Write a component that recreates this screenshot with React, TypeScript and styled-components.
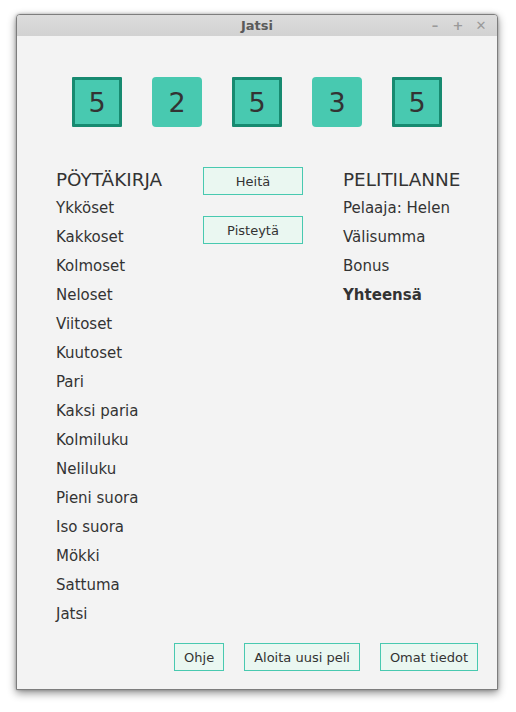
import styled, { createGlobalStyle, css } from 'styled-components';

const GlobalStyle = createGlobalStyle`
  html, body {
    margin: 0;
    padding: 0;
    background: #ffffff;
  }
  body {
    font-family: "DejaVu Sans", "Liberation Sans", sans-serif;
    color: #333333;
  }
`;

const Page = styled.div`
  width: 516px;
  height: 712px;
  padding: 14px 0 0 16px;
  box-sizing: border-box;
`;

const Window = styled.div`
  width: 482px;
  height: 676px;
  box-sizing: border-box;
  border: 1px solid #7d7d7d;
  border-radius: 4px 4px 0 0;
  background: #f3f3f3;
  box-shadow: 0 3px 8px rgba(0, 0, 0, 0.45), 0 0 3px rgba(0, 0, 0, 0.25);
  display: flex;
  flex-direction: column;
  overflow: hidden;
`;

const TitleBar = styled.div`
  position: relative;
  height: 21px;
  flex: none;
  background: linear-gradient(#dcdcdc, #d2d2d2);
  display: flex;
  align-items: center;
  justify-content: center;
  font-size: 13px;
  font-weight: bold;
  color: #5a5a5a;
`;

const Controls = styled.div`
  position: absolute;
  right: 10px;
  top: 0;
  height: 100%;
  display: flex;
  align-items: center;
  gap: 11px;
`;

const Control = styled.span`
  width: 12px;
  display: flex;
  justify-content: center;
  color: #9a9a9a;
  font-size: 13px;
  font-weight: bold;
`;

const Content = styled.div`
  flex: 1;
  display: flex;
  flex-direction: column;
  padding: 41px 19px 18px 39px;
`;

const DiceRow = styled.div`
  display: flex;
  justify-content: center;
  gap: 30px;
  margin-left: -20px;
`;

const Die = styled.div<{ $held: boolean }>`
  width: 50px;
  height: 50px;
  box-sizing: border-box;
  background: #48c9b0;
  display: flex;
  align-items: center;
  justify-content: center;
  font-size: 27px;
  color: #333333;
  border-radius: 4px;
  ${({ $held }) =>
    $held &&
    css`
      border: 3px solid #178a70;
      border-radius: 1px;
    `}
`;

const Board = styled.div`
  display: grid;
  grid-template-columns: 107px 100px 1fr;
  column-gap: 40px;
  margin-top: 40px;
`;

const Column = styled.div`
  display: flex;
  flex-direction: column;
`;

const Heading = styled.div`
  font-size: 18.4px;
  line-height: 26px;
  height: 26px;
  margin-bottom: 0.5px;
  white-space: nowrap;
`;

const Row = styled.div<{ $bold?: boolean }>`
  font-size: 15px;
  line-height: 29px;
  white-space: nowrap;
  font-weight: ${({ $bold }) => ($bold ? 'bold' : 'normal')};
`;

const ActionColumn = styled.div`
  display: flex;
  flex-direction: column;
  gap: 21px;
`;

const Button = styled.button<{ $width?: number }>`
  height: 28px;
  box-sizing: border-box;
  width: ${({ $width }) => ($width ? `${$width}px` : 'auto')};
  padding: 0 9px;
  border: 1.5px solid #48c9b0;
  background: #eaf7f1;
  font-family: "DejaVu Sans", "Liberation Sans", sans-serif;
  font-size: 13px;
  color: #333333;
  cursor: pointer;
`;

const Footer = styled.div`
  margin-top: auto;
  display: flex;
  justify-content: flex-end;
  gap: 20px;
`;

const dice = [
  { value: 5, held: true },
  { value: 2, held: false },
  { value: 5, held: true },
  { value: 3, held: false },
  { value: 5, held: true },
];

const categories = [
  'Ykköset',
  'Kakkoset',
  'Kolmoset',
  'Neloset',
  'Viitoset',
  'Kuutoset',
  'Pari',
  'Kaksi paria',
  'Kolmiluku',
  'Neliluku',
  'Pieni suora',
  'Iso suora',
  'Mökki',
  'Sattuma',
  'Jatsi',
];

function App() {
  return (
    <Page>
      <GlobalStyle />
      <Window>
        <TitleBar>
          Jatsi
          <Controls>
            <Control>–</Control>
            <Control>+</Control>
            <Control>✕</Control>
          </Controls>
        </TitleBar>
        <Content>
          <DiceRow>
            {dice.map((d, i) => (
              <Die key={i} $held={d.held}>
                {d.value}
              </Die>
            ))}
          </DiceRow>
          <Board>
            <Column>
              <Heading>PÖYTÄKIRJA</Heading>
              {categories.map((c) => (
                <Row key={c}>{c}</Row>
              ))}
            </Column>
            <ActionColumn>
              <Button $width={100}>Heitä</Button>
              <Button $width={100}>Pisteytä</Button>
            </ActionColumn>
            <Column>
              <Heading>PELITILANNE</Heading>
              <Row>Pelaaja: Helen</Row>
              <Row>Välisumma</Row>
              <Row>Bonus</Row>
              <Row $bold>Yhteensä</Row>
            </Column>
          </Board>
          <Footer>
            <Button>Ohje</Button>
            <Button>Aloita uusi peli</Button>
            <Button>Omat tiedot</Button>
          </Footer>
        </Content>
      </Window>
    </Page>
  );
}

export default App;
